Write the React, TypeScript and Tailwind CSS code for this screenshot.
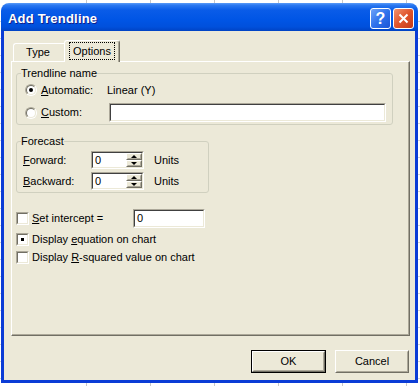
import React from 'react';

// Classic 3D helpers (Windows XP dialog, beige theme)
function Sunken({ className = '', children }: { className?: string; children?: React.ReactNode }) {
  return (
    <div className={`border border-t-[#ACA899] border-l-[#ACA899] border-r-white border-b-white ${className}`}>
      <div className="flex h-full w-full items-center border border-t-[#404040] border-l-[#404040] border-r-[#ECE9D8] border-b-[#ECE9D8] bg-white">
        {children}
      </div>
    </div>
  );
}

function Raised({ className = '', children }: { className?: string; children?: React.ReactNode }) {
  return (
    <div className={`border border-t-white border-l-white border-r-[#716F64] border-b-[#716F64] bg-[#ECE9D8] ${className}`}>
      <div className="flex h-full w-full items-center justify-center border border-t-[#ECE9D8] border-l-[#ECE9D8] border-r-[#ACA899] border-b-[#ACA899]">
        {children}
      </div>
    </div>
  );
}

function Radio({ checked }: { checked?: boolean }) {
  return (
    <div className="h-[12px] w-[12px] shrink-0 rounded-full border border-t-[#ACA899] border-l-[#ACA899] border-r-white border-b-white">
      <div className="flex h-full w-full items-center justify-center rounded-full border border-t-[#716F64] border-l-[#716F64] border-r-[#ECE9D8] border-b-[#ECE9D8] bg-white">
        {checked && <div className="h-[4px] w-[4px] rounded-full bg-black" />}
      </div>
    </div>
  );
}

function Checkbox({ checked }: { checked?: boolean }) {
  return (
    <div className="h-[13px] w-[13px] shrink-0 border border-t-[#ACA899] border-l-[#ACA899] border-r-white border-b-white">
      <div className="flex h-full w-full items-center justify-center border border-t-[#716F64] border-l-[#716F64] border-r-[#ECE9D8] border-b-[#ECE9D8] bg-white">
        {checked && <div className="mr-[1px] h-[3px] w-[3px] bg-black" />}
      </div>
    </div>
  );
}

function Spinner({ value }: { value: string }) {
  return (
    <Sunken className="h-[18px] w-[53px]">
      <span className="flex-1 pl-[2px] leading-[14px]">{value}</span>
      <div className="flex h-full w-[16px] flex-col">
        <Raised className="h-[7px] w-full">
          <div className="h-0 w-0 border-x-[3px] border-b-[3px] border-x-transparent border-b-black" />
        </Raised>
        <Raised className="h-[7px] w-full">
          <div className="h-0 w-0 border-x-[3px] border-t-[3px] border-x-transparent border-t-black" />
        </Raised>
      </div>
    </Sunken>
  );
}

export default function App() {
  return (
    <div className="h-[386px] w-[420px] overflow-hidden bg-white bg-[image:repeating-linear-gradient(90deg,transparent_0_63px,#C8C8C8_63px_64px),repeating-linear-gradient(180deg,transparent_0_16px,#D4D4D4_16px_17px)] bg-[position:23px_5px] pl-[1px] pt-[3px] font-['Liberation_Sans',Arial,sans-serif] text-[11px] text-black">
      {/* Dialog window */}
      <div className="flex h-[380px] w-[417px] flex-col overflow-hidden rounded-t-[8px]">
        {/* Title bar */}
        <div className="flex h-[28px] shrink-0 items-center bg-[linear-gradient(180deg,#5A9BF7_0%,#2B78F0_8%,#0A5CE8_25%,#0055E5_60%,#0050DC_85%,#0043C4_100%)] pl-[7px] pr-[4px]">
          <span className="mt-[3px] text-[13px] font-bold tracking-[0.2px] text-white [text-shadow:1px_1px_0_#0F1E8A]">Add Trendline</span>
          <div className="ml-auto flex gap-[2px] self-start pt-[5px]">
            <div className="flex h-[21px] w-[21px] items-center justify-center rounded-[3px] border border-white bg-[linear-gradient(135deg,#6EA3F8_0%,#2F72EC_50%,#1C55D6_100%)] text-[16px] font-bold leading-none text-white">
              ?
            </div>
            <div className="flex h-[21px] w-[21px] items-center justify-center rounded-[3px] border border-white bg-[linear-gradient(135deg,#F0926F_0%,#E0542C_50%,#C43A18_100%)]">
              <svg width="11" height="11" viewBox="0 0 11 11">
                <path d="M1.5 1.5 L9.5 9.5 M9.5 1.5 L1.5 9.5" stroke="white" strokeWidth="2" />
              </svg>
            </div>
          </div>
        </div>

        {/* Client area */}
        <div className="flex flex-1 flex-col border-x-[3px] border-b-[3px] border-[#0B3CD6] bg-[#ECE9D8]">
          <div className="ml-[7px] mt-[9px] w-[399px]">
            {/* Tabs */}
            <div className="flex h-[21px] items-end pl-[2px]">
              <div className="flex h-[18px] w-[51px] items-center justify-center rounded-tl-[3px] border-l border-t border-l-white border-t-white pr-[2px]">
                Type
              </div>
              <div className="relative z-10 -mb-[1px] flex h-[22px] w-[56px] justify-center rounded-t-[3px] border-l border-r border-t border-l-white border-r-[#716F64] border-t-white bg-[#ECE9D8] pt-[1px] shadow-[inset_-1px_0_0_#ACA899]">
                <span className="h-[18px] border border-dotted border-black px-[3px] leading-[16px]">Options</span>
              </div>
            </div>

            {/* Tab panel */}
            <div className="flex h-[275px] flex-col border border-t-white border-l-white border-r-[#716F64] border-b-[#716F64] shadow-[inset_-1px_-1px_0_#ACA899]">
              <fieldset className="ml-[4px] mt-[5px] w-[377px] rounded-[3px] border border-[#D0D0BF] px-[4px] pb-[2px]">
                <legend className="leading-[13px]">Trendline name</legend>
                <div className="mt-[1px] flex h-[18px] items-center pl-[4px]">
                  <Radio checked />
                  <span className="ml-[4px] w-[66px]">
                    <u>A</u>utomatic:
                  </span>
                  <span>Linear (Y)</span>
                </div>
                <div className="mt-[4px] flex h-[19px] items-center pl-[4px]">
                  <Radio />
                  <span className="ml-[4px] w-[68px]">
                    <u>C</u>ustom:
                  </span>
                  <Sunken className="h-[19px] w-[277px]" />
                </div>
              </fieldset>

              <fieldset className="ml-[4px] mt-[10px] w-[193px] rounded-[3px] border border-[#D0D0BF] px-[4px] pb-[2px]">
                <legend className="leading-[13px]">Forecast</legend>
                <div className="mt-[3px] flex h-[18px] items-center pl-[2px]">
                  <span className="w-[68px]">
                    <u>F</u>orward:
                  </span>
                  <Spinner value="0" />
                  <span className="ml-[10px]">Units</span>
                </div>
                <div className="mt-[3px] flex h-[18px] items-center pl-[2px]">
                  <span className="w-[68px]">
                    <u>B</u>ackward:
                  </span>
                  <Spinner value="0" />
                  <span className="ml-[10px]">Units</span>
                </div>
              </fieldset>

              <div className="ml-[4px] mt-[16px] flex h-[19px] items-center">
                <Checkbox />
                <span className="ml-[3px] w-[101px]">
                  <u>S</u>et intercept =
                </span>
                <Sunken className="h-[19px] w-[72px]">
                  <span className="pl-[2px]">0</span>
                </Sunken>
              </div>
              <div className="ml-[4px] mt-[2px] flex h-[18px] items-center">
                <Checkbox checked />
                <span className="ml-[3px]">
                  Display <u>e</u>quation on chart
                </span>
              </div>
              <div className="ml-[4px] flex h-[18px] items-center">
                <Checkbox />
                <span className="ml-[3px]">
                  Display <u>R</u>-squared value on chart
                </span>
              </div>
            </div>
          </div>

          {/* Dialog buttons */}
          <div className="mt-[14px] flex justify-end gap-[9px] pr-[6px]">
            <div className="h-[23px] w-[75px] border border-black">
              <Raised className="h-full w-full">OK</Raised>
            </div>
            <Raised className="h-[23px] w-[74px]">Cancel</Raised>
          </div>
        </div>
      </div>
    </div>
  );
}
